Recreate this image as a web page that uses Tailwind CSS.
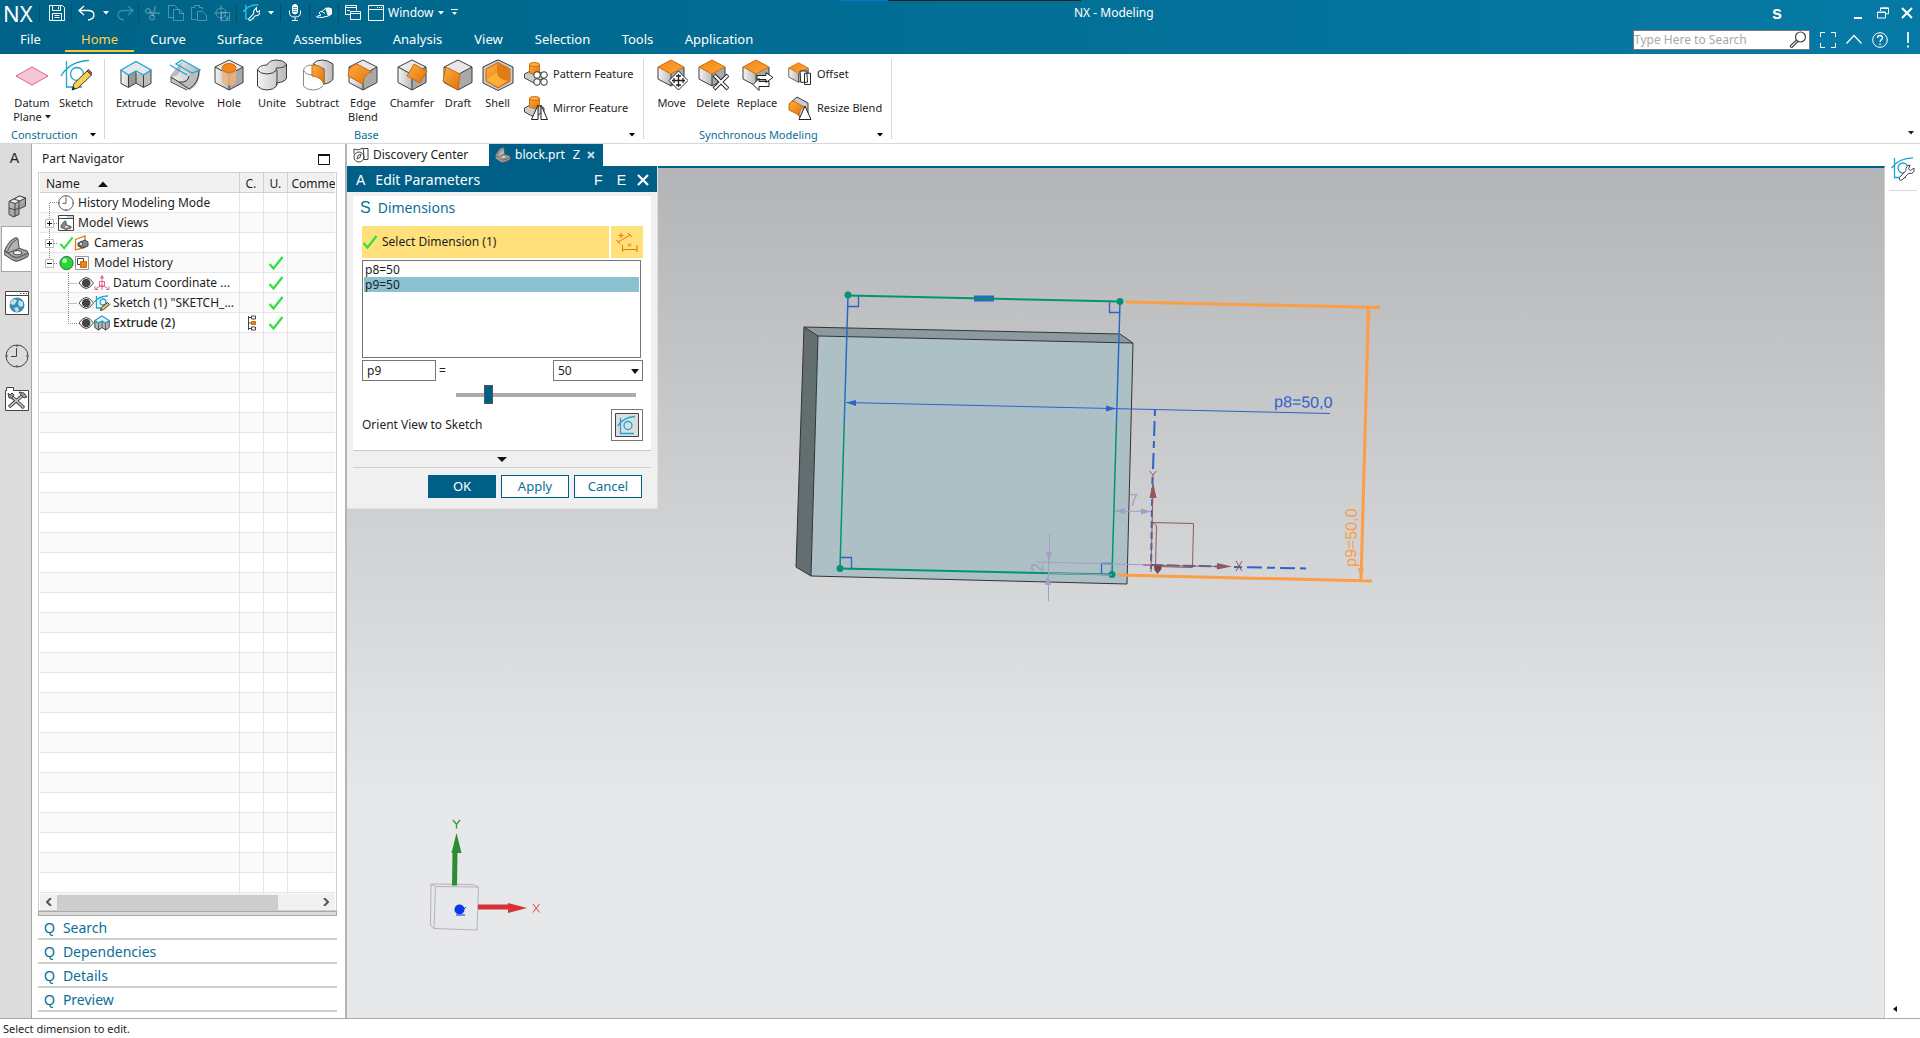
<!DOCTYPE html>
<html lang="en">
<head>
<meta charset="utf-8">
<title>NX - Modeling</title>
<script src="https://cdn.jsdelivr.net/npm/@tailwindcss/browser@4"></script>
</head>
<body class="flex h-screen flex-col overflow-hidden bg-white font-['Noto_Sans',sans-serif] text-xs text-[#1e1e1e]">

<!-- Shared icon symbols -->
<svg class="absolute size-0" aria-hidden="true">
  <defs>
    <linearGradient id="gOrange" x1="0" y1="0" x2="1" y2="1"><stop offset="0" stop-color="#fbb040"/><stop offset="1" stop-color="#e2700a"/></linearGradient>
    <linearGradient id="gTop" x1="0" y1="0" x2="1" y2="1"><stop offset="0" stop-color="#f08a1c"/><stop offset="1" stop-color="#fba430"/></linearGradient>
    <linearGradient id="gGray" x1="0" y1="0" x2="1" y2="0"><stop offset="0" stop-color="#f4f4f4"/><stop offset="1" stop-color="#b9b9b9"/></linearGradient>
    <linearGradient id="gDark" x1="0" y1="0" x2="1" y2="1"><stop offset="0" stop-color="#c8c8c8"/><stop offset="1" stop-color="#8a8a8a"/></linearGradient>
    <symbol id="cube" viewBox="0 0 32 32"><path d="M16 1 30 8 16 15.500 2 8z" fill="#e8e8e8"/><path d="M2 8 16 15.500V31L2 23.500z" fill="url(#gGray)"/><path d="M30 8 16 15.500V31l14-7.500z" fill="#a9a9a9"/><path d="M16 1 30 8v15.500L16 31 2 23.500V8zM2 8l14 7.500L30 8M16 15.500V31" fill="none" stroke="#3c3c3c"/></symbol>
    <symbol id="cubeO" viewBox="0 0 32 32"><path d="M2 8v12l13 7V15z" fill="url(#gGray)"/><path d="M28 8v12l-13 7V15z" fill="#a9a9a9"/><path d="M2 8v12l13 7 13-7V8M15 15v12" fill="none" stroke="#3c3c3c"/><path d="M15 1 28 8l-13 7L2 8z" fill="url(#gTop)" stroke="#d06a10"/></symbol>
    <symbol id="tri" viewBox="0 0 6 4"><path d="M0 0h6L3 3.500z" fill="currentColor"/></symbol>
    <symbol id="check" viewBox="0 0 16 16"><path d="M1.500 9 5.500 13.500 14.500 2" fill="none" stroke="#2ee03c" stroke-width="2.200"/></symbol>
    <symbol id="eye" viewBox="0 0 16 16"><path d="M1 8Q8-3 15.500 8 8 19 1 8z" fill="#fff" stroke="#444"/><circle cx="8.200" cy="8" r="4.300" fill="#444"/></symbol>
    <symbol id="sketchWrench" viewBox="0 0 24 24"><path d="M3.500 1v19.500H15M.5 11Q8 1 22 .8" fill="none" stroke="#19a7d0" stroke-width="1.300"/><circle cx="12" cy="11" r="5" fill="none" stroke="#19a7d0" stroke-width="1.300"/><path d="M8.500 20.500 15 13.500Q14 9 19 8l-1.500 4 2 1.500 3.500-2.500Q24 17 17.500 16.500l-6.500 6.500Q7.500 24 8.500 20.500z" fill="#fff" stroke="#444"/></symbol>
    <symbol id="bracket" viewBox="0 0 24 24">
      <path d="M.7 13.500 2.500 10 14 10.500 22 13.500Q24.500 16 22.500 19L15 22.500Q11 24 8 22L.7 17z" fill="url(#gDark)" stroke="#555"/>
      <path d="M.7 13.500Q3.500 5 10.500 1q2.500-1 3 1.500L14.500 11 4.500 15z" fill="#b4b4b4" stroke="#555"/>
      <path d="M3.500 13.500Q6 6 12.500 2M.7 13.500 8 18.500q3 2 7 .5l8-3.500" fill="none" stroke="#555"/>
      <ellipse cx="13" cy="15" rx="4" ry="2" fill="#ececec" stroke="#555"/>
    </symbol>
    <symbol id="sketchIcon" viewBox="0 0 32 32"><path d="M6.500 2v26H22M1 17Q10 2 29 1.500" fill="none" stroke="#19a7d0" stroke-width="1.300"/><circle cx="17" cy="15" r="6.500" fill="none" stroke="#19a7d0" stroke-width="1.300"/><path d="m12 31 2-6.500L27 12l4.500 4L18 29z" fill="#f7cf52" stroke="#3c3c3c"/><path d="m27 12 1.500-1.500 4 4L31.500 16z" fill="#e05060" stroke="#3c3c3c"/><path d="m12 31 1-3.500 2.500 2z" fill="#222"/></symbol>
    <symbol id="extrude" viewBox="0 0 32 32"><path d="M1 11v13.500l7.500 4L16 24V14.500L8.500 15z" fill="url(#gGray)"/><path d="M31 11v13.500l-7.500 4L16 24V14.500l8 .5z" fill="#bdbdbd"/><path d="M8.500 16v12.500L16 24V12z" fill="#999"/><path d="M1 11v13.500l7.500 4L16 24l7.500 4.500 7.500-4V11M8.500 16v12M16 12v12M23.500 16v12" fill="none" stroke="#3c3c3c"/><path d="M1 11 16 2.500 31 11l-7.500 5-7.500-4-7.500 4z" fill="#e8e8e8" stroke="#19a7d0" stroke-width="1.300"/></symbol>
    <symbol id="extrudeSmall" viewBox="0 0 16 16"><path d="M.8 6v6.500L4.500 15 8 12.500l3.500 2.500 3.700-2.500V6L11.500 8 8 6 4.500 8z" fill="#b8b8b8" stroke="#444"/><path d="M4.500 8v7M8 6v6.500M11.500 8v7" fill="none" stroke="#444" stroke-width=".8"/><path d="M.8 5.500 8 1l7.200 4.500L11.500 8 8 6 4.500 8z" fill="#eee" stroke="#19a7d0" stroke-width="1.300"/></symbol>
    <symbol id="clock" viewBox="0 0 24 24"><circle cx="12" cy="12" r="11" fill="#fff" stroke="#444" stroke-width="1.300"/><path d="M12 4v8.500H6.500M12 1v2M12 21v2M1 12h2M21 12h2" fill="none" stroke="#444" stroke-width="1.300"/></symbol>
  </defs>
</svg>

<header class="relative shrink-0 bg-linear-to-r from-[#006387] to-[#067aa5] text-white">
  <div class="absolute top-0 left-[840px] h-px w-12 bg-[#0078d7]"></div>
  <div class="absolute top-0 left-[888px] h-px w-[193px] bg-[#222]"></div>
  <!-- Title bar -->
  <div class="relative flex h-[27px] items-center pb-0.5">
    <div class="w-[39px] pl-[3px] text-[22px] leading-6">NX</div>
    <div class="flex h-[18px] w-8 items-center justify-center border-l border-[#00506e] pl-0.5">
      <button aria-label="Save"><svg width="16" height="16" viewBox="0 0 16 16" fill="none" stroke="#fff"><path d="M.5.500h13l2 2v13H.5zM3.500.500v5h8v-5M9.500 1.500v3M3.500 15.500v-7h9v7M5.500 10.500h5M5.500 12.500h5"/></svg></button>
    </div>
    <div class="flex h-[18px] w-[67px] items-center border-l border-[#00506e] pl-1.5">
      <button aria-label="Undo"><svg width="17" height="16" viewBox="0 0 17 16" fill="none" stroke="#fff" stroke-width="1.300"><path d="M6 1 1 5.500 6 10M1 5.500h9q6 0 6 4.500 0 4-6 5"/></svg></button>
      <svg class="ml-2" width="6" height="4"><use href="#tri"/></svg>
      <button class="ml-2 opacity-25" aria-label="Redo"><svg width="17" height="16" viewBox="0 0 17 16" fill="none" stroke="#fff" stroke-width="1.300"><path d="m11 1 5 4.500L11 10M16 5.500H7q-6 0-6 4.500 0 4 6 5"/></svg></button>
    </div>
    <div class="flex h-[18px] w-[98px] items-center gap-[7px] border-l border-[#00506e] pl-1.5 text-white/30">
      <button aria-label="Cut"><svg width="16" height="16" viewBox="0 0 16 16" fill="none" stroke="currentColor" stroke-width="1.300"><circle cx="3" cy="6" r="2.300"/><circle cx="7" cy="12.500" r="2.300"/><path d="m5 7 10 1.500M8 10.500 10.500 1M5 7l4 4"/></svg></button>
      <button aria-label="Copy"><svg width="16" height="16" viewBox="0 0 16 16" fill="none" stroke="currentColor"><path d="M5.500 12.500h-5V.500h6l3 3v1M5.500 4.500h6l4 4v7h-10zM11.500 4.500v4h4"/></svg></button>
      <button aria-label="Paste"><svg width="16" height="16" viewBox="0 0 16 16" fill="none" stroke="currentColor"><path d="M5.500 14.500h-5v-12h3v-2h5v2h3v2M6.500 6.500h5l4 4v5h-9z"/></svg></button>
      <button aria-label="Repeat command"><svg width="16" height="16" viewBox="0 0 16 16" fill="none" stroke="currentColor"><circle cx="7" cy="8" r="5"/><path d="M7 0v16M0 8h12M7.500 7.500h8v8h-8zM10 10l4 4m0-3v3h-3"/></svg></button>
    </div>
    <div class="flex h-[18px] w-11 items-center border-l border-[#00506e] pl-1.5">
      <button aria-label="Sketch tools"><svg width="17" height="17" viewBox="0 0 24 24"><path d="M4 1v20h12M.5 11Q8 1 22 1" fill="none" stroke="#28c0ee" stroke-width="2"/><path d="M8.500 20.500 15 13.500Q14 9 19 5l0 5 2 1.500 3-2.500Q24 17 17.500 16.500l-6.500 6.500Q7.500 24 8.500 20.500z" fill="#006b90" stroke="#fff" stroke-width="1.500"/></svg></button>
      <svg class="ml-2" width="6" height="4"><use href="#tri"/></svg>
    </div>
    <div class="flex h-[18px] w-[29px] items-center justify-center border-l border-[#00506e]">
      <button aria-label="Voice"><svg width="12" height="17" viewBox="0 0 12 17" fill="none" stroke="#fff"><rect x="3.500" y=".5" width="5" height="9.500" rx="2.500" fill="#fff"/><path d="M.5 6.500V9q0 4 5.500 4t5.500-4V6.500M6 13v3.500M3 16.500h6"/><path d="M4 3.500h4M4 5.500h4M4 7.500h4" stroke="#006b90" stroke-width=".7"/></svg></button>
    </div>
    <div class="flex h-[18px] w-[29px] items-center justify-center border-l border-[#00506e]">
      <button aria-label="Touch mode"><svg width="16" height="12" viewBox="0 0 16 12" fill="none" stroke="#fff"><path d="M6 4.500 10 1l5 .5v6l-3 1.500-6 1.500L.5 10l1-1L5 8l-2-2q1-2 3-1.500l3 2"/><path d="m10 2 3-1 2.500 1v5L12 8z" fill="#e8f4f8"/></svg></button>
    </div>
    <div class="flex h-[18px] items-center gap-[7px] border-l border-[#00506e] pl-1.5">
      <button aria-label="Switch window"><svg width="16" height="16" viewBox="0 0 16 16" fill="none" stroke="#fff"><path d="M5.500 9.500h-5V.500h11v5M.5 2.500h11M5.500 6.500h10v8h-10zM5.500 8.500h10M2 5.500h3"/></svg></button>
      <button class="flex items-center"><svg width="16" height="16" viewBox="0 0 16 16" fill="none" stroke="#fff"><path d="M.5.500h15v15H.5zM.5 4.500h15M9 2.500h1M11 2.500h1M13 2.500h1"/></svg><span class="ml-1">Window</span><svg class="ml-1" width="6" height="4"><use href="#tri"/></svg></button>
      <button aria-label="Customize toolbar"><svg width="7" height="7" viewBox="0 0 7 7"><path d="M0 0h7v1H0zM1 3h5L3.500 6z" fill="#fff"/></svg></button>
    </div>
    <h1 class="absolute left-[1074px] text-xs">NX - Modeling</h1>
    <div class="mr-[7px] ml-auto flex items-center">
      <span class="mr-[71px] font-['Liberation_Sans',sans-serif] text-lg font-bold">s</span>
      <button class="mr-3.5" aria-label="Minimize"><svg width="10" height="12" viewBox="0 0 10 12"><path d="M1 11h8" stroke="#fff" stroke-width="2"/></svg></button>
      <button class="mr-3" aria-label="Restore"><svg width="12" height="12" viewBox="0 0 12 12" fill="none" stroke="#fff"><path d="M3.500 4V.800h8v6h-3M3.500 1.500h8"/><path d="M.5 5h8v6h-8zM.5 5.500h8"/></svg></button>
      <button aria-label="Close"><svg width="12" height="12" viewBox="0 0 12 12"><path d="m1 1 10 10M11 1 1 11" stroke="#fff" stroke-width="2"/></svg></button>
    </div>
  </div>
  <!-- Ribbon tabs -->
  <nav class="flex h-[27px] items-stretch text-center text-[13px] leading-6">
    <a href="#" class="w-[61px]">File</a>
    <a href="#" class="mb-0.5 ml-1 w-[69px] border-b-2 border-[#ffc531] text-[#ffd24d]">Home</a>
    <a href="#" class="w-[68px]">Curve</a>
    <a href="#" class="w-[76px]">Surface</a>
    <a href="#" class="w-[99px]">Assemblies</a>
    <a href="#" class="w-[81px]">Analysis</a>
    <a href="#" class="w-[61px]">View</a>
    <a href="#" class="w-[87px]">Selection</a>
    <a href="#" class="w-[63px]">Tools</a>
    <a href="#" class="w-[100px]">Application</a>
    <div class="mr-2 ml-auto flex items-start gap-[10px] pt-[3px]">
      <label class="flex h-5 w-[177px] items-center border border-[#777] bg-white pr-0.5">
        <input type="text" aria-label="Search" placeholder="Type Here to Search" class="min-w-0 flex-1 text-xs text-black placeholder:text-[#a8a8a8] focus:outline-none">
        <svg width="18" height="18" viewBox="0 0 18 18" fill="none" stroke="#444" stroke-width="1.200"><circle cx="11.500" cy="6" r="5"/><path d="m7.500 9-6 5.500q-.5 2 1.500 2L9 10.500"/></svg>
      </label>
      <button class="mt-0.5" aria-label="Full screen"><svg width="16" height="16" viewBox="0 0 16 16" fill="none" stroke="#fff"><path d="M5 .500H.5V5M11 .500h4.500V5M5 15.500H.5V11M11 15.500h4.500V11"/></svg></button>
      <button class="mt-1" aria-label="Minimize ribbon"><svg width="16" height="11" viewBox="0 0 16 11" fill="none" stroke="#fff" stroke-width="1.200"><path d="m.5 9.500 7.500-8 7.500 8"/></svg></button>
      <button class="mt-0.5" aria-label="Help"><svg width="16" height="16" viewBox="0 0 16 16" fill="none" stroke="#fff"><circle cx="8" cy="8" r="7.300"/><path d="M5.500 6q0-2.500 2.500-2.500T10.500 6Q10.500 7 8.500 8.500L8 10M8 11.500v1.500" stroke-width="1.300"/></svg></button>
      <button class="mt-0.5 ml-[6px]" aria-label="Alerts"><svg width="8" height="16" viewBox="0 0 8 16"><path d="M4 0v11M4 13.500v2" stroke="#fff" stroke-width="1.700"/></svg></button>
    </div>
  </nav>
</header>

<!-- Ribbon -->
<section class="relative flex h-[90px] shrink-0 items-start border-b border-[#d8d8d8] pt-[5px] text-[11px] leading-[14px]">
  <div class="flex h-20 w-[105px] flex-col border-r border-[#d8d8d8]">
    <div class="flex flex-1 items-start pl-2">
      <button class="flex w-12 flex-col items-center"><svg width="32" height="32" viewBox="0 0 32 32"><path d="M0 17 16 8l16 9-16 9z" fill="#f8c6da" stroke="#d8668c"/></svg><span class="mt-[5px]">Datum</span><span class="flex items-center gap-[3px]">Plane <svg width="6" height="4"><use href="#tri"/></svg></span></button>
      <button class="flex w-10 flex-col items-center"><svg width="32" height="32"><use href="#sketchIcon"/></svg><span class="mt-[5px]">Sketch</span></button>
    </div>
    <div class="flex h-2 items-center justify-between pr-2 pl-[11px] text-[#0a6f96]">Construction <svg class="text-black" width="6" height="4"><use href="#tri"/></svg></div>
  </div>
  <div class="flex h-20 w-[539px] flex-col border-r border-[#d8d8d8]">
    <div class="flex flex-1 items-start pl-[7px]">
      <button class="flex w-12 flex-col items-center"><svg width="32" height="32"><use href="#extrude"/></svg><span class="mt-[5px]">Extrude</span></button>
      <button class="flex w-[49px] flex-col items-center"><svg width="32" height="32" viewBox="0 0 32 32"><path d="M1 17 12 3 31 11Q31 27 20 31L4 23z" fill="#bbb"/><path d="M13 2 30 11 20 16Q19 23 10 23L2 18Q11 18 12 8z" fill="url(#gGray)"/><path d="M2 18 10 23 20 30Q30 24 30 11M2 18v5l16 8M20 17Q19 24 10 23" fill="none" stroke="#3c3c3c"/><path d="M13 1 31 11l-8 3L7 5zM1 6l17 10" fill="none" stroke="#19a7d0" stroke-width="1.300"/></svg><span class="mt-[5px]">Revolve</span></button>
      <button class="flex w-10 flex-col items-center"><svg width="32" height="32"><use href="#cube"/><path d="M9 10v14q7 5 14 0V10z" fill="#efb27a" opacity=".8"/><ellipse cx="16" cy="9" rx="7" ry="4.500" fill="#f5861a" stroke="#d06a10"/></svg><span class="mt-[5px]">Hole</span></button>
      <button class="flex w-[46px] flex-col items-center"><svg width="32" height="32" viewBox="0 0 32 32"><path d="M1.500 11v16q3 4 9.500 4t9.500-4l0-3q9-1 10-5V5q-3-4-10-4t-9.500 5Q3 6 1.500 11z" fill="url(#gGray)" stroke="#3c3c3c"/><path d="M1.500 11q3 4 9.500 4t9.500-4q-1-3 0-2 9 0 10-4M21 11v15" fill="none" stroke="#3c3c3c"/></svg><span class="mt-[5px]">Unite</span></button>
      <button class="flex w-[45px] flex-col items-center"><svg width="32" height="32" viewBox="0 0 32 32"><path d="M11 5Q14 1 20 1t11 4v15q-2 4-9 5V10z" fill="url(#gGray)" stroke="#3c3c3c"/><path d="M10 6q10 0 12 6v14q-2-8-12-9z" fill="url(#gOrange)" stroke="#d06a10"/><path d="M1.500 11v16q3 4 9.500 4t10-4M1.500 11Q3 6 10 6M1.500 11q2 5 9 5" fill="none" stroke="#888"/></svg><span class="mt-[5px]">Subtract</span></button>
      <button class="flex w-[46px] flex-col items-center"><svg width="32" height="32"><use href="#cube"/><path d="M2 11Q4 6 10 5l15 8q-8 1-9 12L1 17z" fill="url(#gOrange)" stroke="#d06a10"/></svg><span class="mt-[5px]">Edge<br>Blend</span></button>
      <button class="flex w-[52px] flex-col items-center"><svg width="32" height="32"><use href="#cube"/><path d="M18 5 31 12 24 24 11 17z" fill="url(#gOrange)" stroke="#d06a10"/></svg><span class="mt-[5px]">Chamfer</span></button>
      <button class="flex w-10 flex-col items-center"><svg width="32" height="32"><use href="#cube"/><path d="M4 8l14 7-2 16L1 22z" fill="url(#gOrange)" stroke="#d06a10"/></svg><span class="mt-[5px]">Draft</span></button>
      <button class="flex w-[39px] flex-col items-center"><svg width="32" height="32" viewBox="0 0 32 32"><path d="M16 .800 31 8v16l-15 7.500L1 24V8z" fill="#ccc" stroke="#3c3c3c"/><path d="M16 3.500 28 10v12l-12 7-12-7V10z" fill="url(#gOrange)" stroke="#c8640c"/><path d="M15 4v10q4 8 12 7L16 28 4 21l11-8z" fill="#fbb03a"/><path d="M15 4 28 10v12q-12-1-13-8z" fill="#e07c18"/></svg><span class="mt-[5px]">Shell</span></button>
      <div class="ml-[7px] flex flex-col gap-[10px] pt-[3px]">
        <button class="flex h-6 items-center gap-[5px]"><svg width="24" height="24" viewBox="0 0 24 24"><path d="M.5 12 10 7l10 5v4l-10 5-9.500-5z" fill="#ccc" stroke="#444"/><path d="M5.500 2v9q5 3 10 0V2z" fill="url(#gOrange)" stroke="#d06a10"/><ellipse cx="10.500" cy="2.500" rx="5" ry="2" fill="#fbb040" stroke="#d06a10"/><g fill="#fff" stroke="#333"><circle cx="13" cy="13" r="3.300"/><circle cx="20" cy="13" r="3.300"/><circle cx="13" cy="20" r="3.300"/><circle cx="20" cy="20" r="3.300"/></g></svg>Pattern Feature</button>
        <button class="flex h-6 items-center gap-[5px]"><svg width="24" height="24" viewBox="0 0 24 24"><path d="M.5 12 10 7l10 5v4l-10 5-9.500-5z" fill="#ccc" stroke="#444"/><path d="M5.500 2v9q5 3 10 0V2z" fill="url(#gOrange)" stroke="#d06a10"/><ellipse cx="10.500" cy="2.500" rx="5" ry="2" fill="#fbb040" stroke="#d06a10"/><path d="M14 9v14.500H7.500zM17 9v14.500h6.500z" fill="#fff" stroke="#222"/></svg>Mirror Feature</button>
      </div>
    </div>
    <div class="flex h-2 items-center pr-2 pl-[249px] text-[#0a6f96]">Base <svg class="ml-auto text-black" width="6" height="4"><use href="#tri"/></svg></div>
  </div>
  <div class="flex h-20 w-[248px] flex-col border-r border-[#d8d8d8]">
    <div class="flex flex-1 items-start pl-[6px]">
      <button class="flex w-[43px] flex-col items-center"><svg width="32" height="32" viewBox="0 0 32 32"><use href="#cubeO"/><path d="m22.500 12 9.500 9.500-9.500 9.500-9.500-9.500z" fill="#fff" stroke="#222"/><path d="M22.500 15v13M16 21.500h13M20 17h5M20 26h5M18 19v5M27 19v5" stroke="#222" stroke-width="1.300"/></svg><span class="mt-[5px]">Move</span></button>
      <button class="flex w-10 flex-col items-center"><svg width="32" height="32" viewBox="0 0 32 32"><use href="#cubeO"/><path d="m17 16 14 14M31 16 17 30" stroke="#222" stroke-width="4"/><path d="m17.500 16.500 13 13M30.500 16.500l-13 13" stroke="#fff" stroke-width="2"/></svg><span class="mt-[5px]">Delete</span></button>
      <button class="flex w-12 flex-col items-center"><svg width="32" height="32" viewBox="0 0 32 32"><use href="#cubeO"/><path d="M16 16.500h9v-3l7 5-7 5v-3h-9zM28 22.500H18v-3l-6 6 6 6v-4h10z" fill="#fff" stroke="#222"/></svg><span class="mt-[5px]">Replace</span></button>
      <div class="ml-[7px] flex flex-col gap-[10px] pt-[3px]">
        <button class="flex h-6 items-center gap-[5px]"><svg width="24" height="24" viewBox="0 0 32 32"><use href="#cubeO" x="-1"/><path d="M22 15h8v15h-8zM16 12h9l1 15h-9z" fill="#fff" stroke="#222" stroke-width="1.300"/></svg>Offset</button>
        <button class="flex h-6 items-center gap-[5px]"><svg width="24" height="24" viewBox="0 0 24 24"><path d="M1 8 9 1l11 6v10l-8 4z" fill="#ccc" stroke="#3c3c3c"/><path d="M1 9q1-4 5-4l10 6q-4 1-5 8L1 14z" fill="url(#gOrange)" stroke="#d06a10"/><path d="m17 10 6 13.500H11z" fill="#fff" stroke="#222"/></svg>Resize Blend</button>
      </div>
    </div>
    <div class="flex h-2 items-center pr-2 pl-[55px] text-[#0a6f96]">Synchronous Modeling <svg class="ml-auto text-black" width="6" height="4"><use href="#tri"/></svg></div>
  </div>
  <svg class="mr-[6px] mb-2 ml-auto self-end" width="6" height="4"><use href="#tri"/></svg>
</section>

<div class="flex min-h-0 flex-1">
  <!-- Resource bar -->
  <nav class="flex w-8 shrink-0 flex-col items-end border-r border-[#a8a8a8] bg-[#dcdcdc]">
    <div class="flex h-11 w-full justify-center pt-[7px] pr-0.5 font-['Liberation_Sans',sans-serif] text-sm leading-[14px]">A</div>
    <button class="flex h-9 w-[29px] items-center justify-center" aria-label="Assembly Navigator"><svg width="20" height="24" viewBox="0 0 20 24" stroke="#444" stroke-linejoin="round"><path d="M2 7.500 12.500 2 18.500 4v8L12 15v5.500L6.500 23 2 20.500z" fill="url(#gDark)"/><path d="M2 7.500 12.500 2l6 2L8 9.500z" fill="#ececec"/><path d="M8 9.500V22M2 14l6 2 4-2V7.500M7 5l6 2.200" fill="none"/></svg></button>
    <button class="mt-0.5 flex h-[46px] w-[30px] items-center justify-center border border-r-0 border-[#a8a8a8] bg-white" aria-label="Part Navigator"><svg width="25" height="25"><use href="#bracket"/></svg></button>
    <button class="mt-[17px] flex h-7 w-[29px] items-center justify-center" aria-label="Web Browser"><svg width="24" height="24" viewBox="0 0 24 24"><path d="M.5.500h23v23H.5z" fill="#fff" stroke="#444"/><path d="M.5 4.500h23M15 2.500h1.500M18 2.500h1.500M21 2.500h1" stroke="#444"/><circle cx="12" cy="14" r="7.500" fill="#3a8cb0"/><path d="M7 9q4-2 5 1l-3 4-4-1zM14 9l4 2v4l-3 1-2-3zM9 17l4-1 1 4-3 1z" fill="#bfe0ec"/></svg></button>
    <button class="mt-[25px] flex h-7 w-[29px] items-center justify-center" aria-label="History"><svg width="24" height="24" viewBox="0 0 24 24"><circle cx="12" cy="12" r="11" fill="none" stroke="#444"/><path d="M11.500 4v8.500H6M12 1v2M12 21v2M1 12h2M21 12h2" fill="none" stroke="#444"/></svg></button>
    <button class="mt-[15px] flex h-7 w-[29px] items-center justify-center" aria-label="Process Studio"><svg width="24" height="24" viewBox="0 0 24 24"><path d="M.5 3.500h1v-3h7v3h15v20H.5z" fill="#fff" stroke="#444"/><path d="M4 20 18 8M5 8l14 13" stroke="#444" stroke-width="3.500"/><path d="M4.500 19.500 17 9M7 9.500l11.500 11" stroke="#ccc" stroke-width="1.500"/><path d="M3 6l2 2 2-2 2 2-2 3H4zM14 5l5 1 3 4-3 1-3-3z" fill="#999" stroke="#444"/></svg></button>
  </nav>

  <!-- Part Navigator -->
  <aside class="flex w-[315px] shrink-0 flex-col border-r-2 border-[#b4b4b4] pr-2 pb-1.5 pl-1.5">
    <div class="flex h-7 items-center justify-between pr-[7px] pl-1 pt-0.5">
      <h2>Part Navigator</h2>
      <svg width="12" height="11" viewBox="0 0 12 11"><path d="M.5 1h11v9.500H.5z" fill="none" stroke="#111"/><path d="M0 1h12" stroke="#111" stroke-width="2"/></svg>
    </div>
    <div class="flex min-h-0 flex-1 flex-col border border-[#d0d0d0] px-px">
      <div class="min-h-0 flex-1 overflow-hidden">
        <table class="w-full table-fixed border-collapse text-xs leading-[19px]">
          <colgroup><col class="w-[199px]"><col class="w-6"><col class="w-6"><col></colgroup>
          <thead>
            <tr class="h-[19px] border-b border-[#d0d0d0] bg-[#f0f0f0] text-left text-xs leading-4">
              <th class="border-r border-[#d0d0d0] pt-[3px] pl-1.5 font-normal"><span class="flex items-center gap-[18px]">Name <svg width="10" height="6" viewBox="0 0 10 6"><path d="M0 6 5 .500 10 6z" fill="#111"/></svg></span></th>
              <th class="border-r border-[#d0d0d0] pt-[3px] pl-1.5 font-normal">C.</th>
              <th class="border-r border-[#d0d0d0] pt-[3px] pl-1.5 font-normal">U.</th>
              <th class="pt-[3px] pl-1 font-normal">Comme</th>
            </tr>
          </thead>
          <tbody id="tree">
            <tr class="h-5 border-b border-[#e6e6e6]">
              <td class="border-r border-[#e6e6e6]"><div class="flex h-[19px] items-center whitespace-nowrap"><svg class="shrink-0" width="18" height="19"><path d="M9.500 19V9.500H18" fill="none" stroke="#888" stroke-dasharray="1 1"/></svg><svg class="shrink-0" width="16" height="16"><use href="#clock"/></svg><span class="ml-1">History Modeling Mode</span></div></td>
              <td class="border-r border-[#e6e6e6]"></td><td class="border-r border-[#e6e6e6]"></td><td></td>
            </tr>
            <tr class="h-5 border-b border-[#e6e6e6] bg-[#fafafa]">
              <td class="border-r border-[#e6e6e6]"><div class="flex h-[19px] items-center whitespace-nowrap"><svg class="shrink-0" width="18" height="19"><path d="M9.500 0v19M14 10.500h4" fill="none" stroke="#888" stroke-dasharray="1 1"/><path d="M5.500 6.500h8v8h-8z" fill="#fff" stroke="#bbb"/><path d="M7 10.500h5M9.500 8v5" stroke="#111"/></svg><svg class="shrink-0" width="16" height="16" viewBox="0 0 16 16"><path d="M.5.500h15v15H.5z" fill="#fff" stroke="#444"/><path d="M1 3.500h14M9.500 2h1M11.500 2h1M13.500 2h1" stroke="#444"/><path d="M3 10.500 6.500 6q1.500-.5 1.500 1l.5 3 4.500 1.500v1.500l-5 1.500-5-2z" fill="#888" stroke="#444" stroke-width=".8"/><ellipse cx="8.500" cy="12" rx="1.800" ry=".8" fill="#fff"/></svg><span class="ml-1">Model Views</span></div></td>
              <td class="border-r border-[#e6e6e6]"></td><td class="border-r border-[#e6e6e6]"></td><td></td>
            </tr>
            <tr class="h-5 border-b border-[#e6e6e6]">
              <td class="border-r border-[#e6e6e6]"><div class="flex h-[19px] items-center whitespace-nowrap"><svg class="shrink-0" width="18" height="19"><path d="M9.500 0v19M14 10.500h4" fill="none" stroke="#888" stroke-dasharray="1 1"/><path d="M5.500 6.500h8v8h-8z" fill="#fff" stroke="#bbb"/><path d="M7 10.500h5M9.500 8v5" stroke="#111"/></svg><svg class="ml-px shrink-0" width="15" height="16"><use href="#check"/></svg><svg class="shrink-0" width="16" height="16" viewBox="0 0 16 16"><path d="M1.500 4.500 11 1v11.500L1.500 15z" fill="#fff" stroke="#e8750e" stroke-width="1.300"/><path d="m4 8 7-3 3 2v4l-6 2-4-2z" fill="#888" stroke="#444"/><circle cx="7" cy="9" r="2" fill="#ddd" stroke="#444"/></svg><span class="ml-1">Cameras</span></div></td>
              <td class="border-r border-[#e6e6e6]"></td><td class="border-r border-[#e6e6e6]"></td><td></td>
            </tr>
            <tr class="h-5 border-b border-[#e6e6e6] bg-[#fafafa]">
              <td class="border-r border-[#e6e6e6]"><div class="flex h-[19px] items-center whitespace-nowrap"><svg class="shrink-0" width="18" height="19"><path d="M9.500 0v7M14 10.500h4" fill="none" stroke="#888" stroke-dasharray="1 1"/><path d="M5.500 6.500h8v8h-8z" fill="#fff" stroke="#bbb"/><path d="M7 10.500h5" stroke="#111"/></svg><svg class="ml-px shrink-0" width="15" height="16" viewBox="0 0 16 16"><circle cx="8" cy="8" r="7" fill="#25d935" stroke="#3a5a3a"/><circle cx="6" cy="5.500" r="2.500" fill="#b8f8bc"/></svg><svg class="shrink-0" width="16" height="16" viewBox="0 0 16 16"><path d="M1.500 1.500h13v13h-13z" fill="#fff" stroke="#999"/><path d="M3.500 3.500h6v6h-6z" fill="#fff" stroke="#444"/><path d="M6.500 6.500h6v6h-6z" fill="#f08018" stroke="#d06a10"/></svg><span class="ml-1">Model History</span></div></td>
              <td class="border-r border-[#e6e6e6]"></td><td class="border-r border-[#e6e6e6] pl-1"><svg width="16" height="16"><use href="#check"/></svg></td><td></td>
            </tr>
            <tr class="h-5 border-b border-[#e6e6e6]">
              <td class="border-r border-[#e6e6e6]"><div class="flex h-[19px] items-center whitespace-nowrap"><svg class="shrink-0" width="38" height="19"><path d="M28.500 0v19M28.500 10.500H37" fill="none" stroke="#888" stroke-dasharray="1 1"/></svg><svg class="shrink-0" width="16" height="16"><use href="#eye"/></svg><svg class="shrink-0" width="16" height="16" viewBox="0 0 16 16" fill="none" stroke="#d8668c"><path d="M8 1v14M8 10l6 3.500M8 10l-6 3.500M5.500 6.500h5v5h-5zM6.500 3 8 .500 9.500 3zM1 11.500v3h3M15 11.500v3h-3"/></svg><span class="ml-[3px]">Datum Coordinate ...</span></div></td>
              <td class="border-r border-[#e6e6e6]"></td><td class="border-r border-[#e6e6e6] pl-1"><svg width="16" height="16"><use href="#check"/></svg></td><td></td>
            </tr>
            <tr class="h-5 border-b border-[#e6e6e6] bg-[#fafafa]">
              <td class="border-r border-[#e6e6e6]"><div class="flex h-[19px] items-center whitespace-nowrap"><svg class="shrink-0" width="38" height="19"><path d="M28.500 0v19M28.500 10.500H37" fill="none" stroke="#888" stroke-dasharray="1 1"/></svg><svg class="shrink-0" width="16" height="16"><use href="#eye"/></svg><svg class="shrink-0" width="16" height="16" viewBox="0 0 16 16"><path d="M2.500 1v12H8M.5 7Q5 1 14 1" fill="none" stroke="#19a7d0" stroke-width="1.300"/><circle cx="9" cy="7" r="3" fill="none" stroke="#19a7d0" stroke-width="1.300"/><path d="m6.500 15.500 1-3 6-5 2 2-6 5z" fill="#f7cf52" stroke="#333"/></svg><span class="ml-[3px]">Sketch (1) "SKETCH_...</span></div></td>
              <td class="border-r border-[#e6e6e6]"></td><td class="border-r border-[#e6e6e6] pl-1"><svg width="16" height="16"><use href="#check"/></svg></td><td></td>
            </tr>
            <tr class="h-5 border-b border-[#e6e6e6]">
              <td class="border-r border-[#e6e6e6]"><div class="flex h-[19px] items-center whitespace-nowrap"><svg class="shrink-0" width="38" height="19"><path d="M28.500 0v10.500H37" fill="none" stroke="#888" stroke-dasharray="1 1"/></svg><svg class="shrink-0" width="16" height="16"><use href="#eye"/></svg><svg class="shrink-0" width="16" height="16"><use href="#extrudeSmall"/></svg><span class="ml-[3px] font-medium">Extrude (2)</span></div></td>
              <td class="border-r border-[#e6e6e6] pl-1"><svg width="14" height="16" viewBox="0 0 14 16"><path d="M4.500 1v14M4.500 2.500H7M4.500 8H7M4.500 13.500H7" stroke="#444"/><path d="M7.500 1h4v3h-4zM7.500 12h4v3h-4z" fill="#fff" stroke="#444"/><path d="M7.500 6.500h4v3h-4z" fill="#f08018" stroke="#d06a10"/></svg></td><td class="border-r border-[#e6e6e6] pl-1"><svg width="16" height="16"><use href="#check"/></svg></td><td></td>
            </tr>
          </tbody>
        </table>
      </div>
      <div class="flex h-4 items-center bg-[#f0f0f0] px-1.5">
        <svg width="6" height="8" viewBox="0 0 6 8" fill="none" stroke="#555" stroke-width="2"><path d="M5 0 1 4l4 4"/></svg>
        <div class="ml-[5px] h-[15px] w-[221px] bg-[#cdcdcd]"></div>
        <svg class="ml-auto" width="6" height="8" viewBox="0 0 6 8" fill="none" stroke="#555" stroke-width="2"><path d="m1 0 4 4-4 4"/></svg>
      </div>
    </div>
    <div class="h-[5px] border border-[#a8a8a8] bg-[#dcdcdc]"></div>
    <div class="text-sm leading-6 text-[#0a6f96]">
      <button class="flex h-6 w-full items-start gap-2 border-b-2 border-[#d0d0d0] pl-1.5"><span class="font-['Liberation_Sans',sans-serif]">Q</span>Search</button>
      <button class="flex h-6 w-full items-start gap-2 border-b-2 border-[#d0d0d0] pl-1.5"><span class="font-['Liberation_Sans',sans-serif]">Q</span>Dependencies</button>
      <button class="flex h-6 w-full items-start gap-2 border-b-2 border-[#d0d0d0] pl-1.5"><span class="font-['Liberation_Sans',sans-serif]">Q</span>Details</button>
      <button class="flex h-6 w-full items-start gap-2 border-b-2 border-[#d0d0d0] pl-1.5"><span class="font-['Liberation_Sans',sans-serif]">Q</span>Preview</button>
    </div>
  </aside>

  <!-- Work area -->
  <main class="flex min-w-0 flex-1 flex-col">
    <div class="flex h-[22px] shrink-0 items-center">
      <button class="flex w-[142px] items-center gap-1 pl-1.5"><svg width="16" height="16" viewBox="0 0 16 16" fill="none" stroke="#444"><path d="m1 2 4 1 5-2 .5 3M1 2v5M10.500 1.500h4.500v11h-4l-.5-9"/><circle cx="6" cy="10" r="5"/><path d="m4 12 1-3.500L8 7l-1 3.500z"/></svg>Discovery Center</button>
      <button class="flex h-full w-[114px] items-center bg-[#005f87] pl-1.5 text-white"><svg width="16" height="16"><use href="#bracket"/></svg><span class="ml-1">block.prt</span><span class="ml-2 font-['Liberation_Sans',sans-serif]">Z</span><svg class="ml-[7px]" width="8" height="8" viewBox="0 0 8 8"><path d="m1 1 6 6M7 1 1 7" stroke="#c8d8e0" stroke-width="2"/></svg></button>
    </div>
    <div class="relative min-h-0 flex-1 border-t-2 border-r border-[#005f87] border-r-[#d0d0d0] bg-linear-to-b from-[#b4b5b7] to-[#e6e8ea] to-75%">
      <svg class="block h-full w-full" viewBox="347 168 1537 849" preserveAspectRatio="xMinYMin meet" fill="none">
        <!-- Solid block -->
        <path d="m804 327 316 7 13 9-315-7z" fill="#8b9a9f"/>
        <path d="m804 327 14 9-7 240-15-9z" fill="#626e70"/>
        <path d="m818 336 315 7-6 241-316-8z" fill="#adc0c6"/>
        <path d="m804 327 316 7 13 9-6 241-316-8-15-9zM804 327l14 9 315 7M818 336l-7 240" stroke="#333"/>
        <!-- Sketch -->
        <linearGradient id="gSide" gradientUnits="userSpaceOnUse" x1="0" y1="296" x2="0" y2="430"><stop offset="0" stop-color="#2f62cc"/><stop offset=".9" stop-color="#2470c0"/><stop offset="1" stop-color="#00966c"/></linearGradient>
        <path d="M848 295 840 568M1120 302l-8 273" stroke="url(#gSide)" stroke-width="1.500"/>
        <path d="M974 298.500h20" stroke="#2f62cc" stroke-width="6"/>
        <path d="m848 295.500 272 6M840 568.500l272 6" stroke="#00966c" stroke-width="2"/>
        <path d="M848 306.500h10.500V296M1109.500 302v10.500H1120M841 557.500h10.500V568M1101.500 574v-10.500H1112" stroke="#2f62cc" stroke-width="1.300"/>
        <g fill="#00966c" stroke="#1a80a0" stroke-width=".8"><circle cx="848" cy="295" r="3.200"/><circle cx="1120" cy="301.500" r="3.200"/><circle cx="1112" cy="574.500" r="3.200"/><circle cx="840" cy="568.500" r="3.200"/></g>
        <!-- Horizontal dimension -->
        <path d="m846 402.500 484 11" stroke="#2f62cc"/>
        <path d="m846 402.500 10-2.500v6zM1116 408.500l-10-3v6z" fill="#2f62cc"/>
        <text x="1274" y="407" transform="rotate(1 1274 407)" fill="#2f62cc" class="font-['Liberation_Sans',sans-serif] text-base">p8=50,0</text>
        <!-- Vertical dimension -->
        <g stroke="#fb9e46" stroke-width="3"><path d="m1126 302 254 5.500M1118 575l254 6M1368.500 308l-7.500 272"/></g>
        <path d="m1368.500 308 3 11h-6zM1361 579l3-11h-6z" fill="#fb9e46"/>
        <text x="1356" y="567" transform="rotate(-89 1356 567)" fill="#fb9e46" class="font-['Liberation_Sans',sans-serif] text-base">p9=50,0</text>
        <!-- Locating dimensions -->
        <g stroke="#a49dc6"><path d="m1115 511 36 .5M1049.500 534v18M1048.500 561v40M1037 562l114 3M1048 573l64 2"/></g>
        <path d="m1115 511 10-3v6zM1151 511.500l-10-3v6zM1049 562l-3-10h6zM1048 575l-3 10h6z" fill="#a49dc6"/>
        <text x="1129" y="506" fill="#a49dc6" class="font-['Liberation_Sans',sans-serif] text-base">7</text>
        <text x="1043" y="572" transform="rotate(-90 1043 572)" fill="#a49dc6" class="font-['Liberation_Sans',sans-serif] text-base">2</text>
        <!-- Sketch axes -->
        <g stroke="#2f62cc" stroke-width="2"><path d="m1155 409-2 61" stroke-dasharray="7 5 15 5 7 5 16 3"/><path d="m1152.500 477-1.500 92" stroke-dasharray="7 4"/><path d="m1151 565 66 1.500" stroke-dasharray="12 4"/><path d="m1234 567 72 1.500" stroke-dasharray="8 5 15 5 8 5 15 5"/></g>
        <g stroke="#94585c"><path d="m1153 484-2 88M1143 565l74 1.500M1151 522.500l42.500 1-1 44-37-1 1-41-4-3M1149.500 471l3.500 4 3.500-4M1153 475v5M1236 561l6 10M1242 561l-6 10"/></g>
        <path d="m1153 482 3.500 16h-7zM1232 566.500l-15-3.500v6.500z" fill="#94585c"/><path d="m1154 566 7 0 .5 3-4 5-3-4z" fill="#7d4549"/>
        <!-- View triad -->
        <path d="m431 884 42 .5 5.500 2.500-1.500 43-43-1.500-3.500-3zM431 884l4.500 2.500 43 .5M435.500 886.500l-1.500 42" stroke="#b4b4b6"/>
        <path d="M452.500 851h5l-.5 34.500h-5z" fill="#2c8c30"/><path d="m456.500 833 5 20h-10z" fill="#2c8c30"/>
        <path d="M478 904.500h31v5h-31z" fill="#d83034"/><path d="m527 908-19-5v10z" fill="#d83034"/>
        <circle cx="459.500" cy="909.500" r="5" fill="#0838e8"/><path d="M456 915h9M461 912l5-5" stroke="#0838e8"/>
        <path d="m453 820 3.500 4.500 3.500-4.500M456.500 824.500v4" stroke="#2c9c34" stroke-width="1.300"/>
        <path d="m533 904 6.500 8.500M539.500 904l-6.500 8.500" stroke="#d84040"/>
      </svg>

      <!-- Edit Parameters dialog -->
      <form class="absolute -top-0.5 left-0 w-[311px] border-r border-b border-[#e0e0e0] bg-[#f0f0f0] pb-[10px]">
        <div class="flex h-[26px] items-center bg-[#005f87] pt-px pr-2 pl-[9px] text-white">
          <span class="font-['Liberation_Sans',sans-serif] text-sm">A</span>
          <h2 class="ml-[10px] text-sm">Edit Parameters</h2>
          <span class="ml-auto font-['Liberation_Sans',sans-serif] text-sm">F</span>
          <span class="ml-3.5 font-['Liberation_Sans',sans-serif] text-sm">E</span>
          <button type="button" class="ml-[11px]" aria-label="Close dialog"><svg width="12" height="12" viewBox="0 0 12 12"><path d="m1 1 10 10M11 1 1 11" stroke="#fff" stroke-width="2.200"/></svg></button>
        </div>
        <div class="mx-1.5 mt-1 border-b border-[#c8c8c8] bg-white pr-[8px] pb-[9px] pl-[9px]">
          <div class="-ml-0.5 flex h-[30px] items-start text-sm leading-6 text-[#0a6f96]"><span class="font-['Liberation_Sans',sans-serif] text-base">S</span><h3 class="ml-[7px]">Dimensions</h3></div>
          <div class="flex h-8 gap-0.5">
            <div class="flex flex-1 items-center gap-1 bg-[#ffe07a]"><svg width="16" height="16"><use href="#check"/></svg>Select Dimension (1)</div>
            <button type="button" class="flex w-8 items-center justify-center bg-[#ffe07a]" aria-label="Dimension filter"><svg width="22" height="20" viewBox="0 0 22 20" fill="none" stroke="#e8750e"><path d="m2 10 12-7M.5 8l3.500 4M12 1l4 4M5 1v5M2.500 3.500h5M6.500 13v7M21 13v7M6.500 17.500H21M12 11.500l3 3M15 11.500l-3 3"/></svg></button>
          </div>
          <ul role="listbox" aria-label="Dimensions" class="mt-0.5 mr-0.5 h-[98px] border border-[#777] p-px leading-[15px]">
            <li role="option" class="pl-px">p8=50</li>
            <li role="option" aria-selected="true" class="bg-[#8bc2d1] pl-px">p9=50</li>
          </ul>
          <div class="mt-0.5 flex h-[21px] items-center">
            <input type="text" value="p9" aria-label="Parameter name" class="h-full w-[74px] border border-[#777] pl-1">
            <span class="ml-[3px]">=</span>
            <div class="relative ml-auto h-full w-[90px]">
              <select aria-label="Parameter value" class="h-full w-full appearance-none border border-[#777] bg-white pl-1"><option>50</option></select>
              <svg class="pointer-events-none absolute top-[9px] right-1" width="8" height="5" viewBox="0 0 6 4" preserveAspectRatio="none"><path d="M0 0h6L3 4z" fill="#111"/></svg>
            </div>
          </div>
          <input type="range" min="0" max="300" value="49" aria-label="Value slider" class="mt-1 mr-[7px] ml-auto block h-5 w-[180px] appearance-none bg-transparent [&::-webkit-slider-runnable-track]:h-1 [&::-webkit-slider-runnable-track]:bg-[#ababab] [&::-webkit-slider-thumb]:-mt-2 [&::-webkit-slider-thumb]:h-[19px] [&::-webkit-slider-thumb]:w-[9px] [&::-webkit-slider-thumb]:appearance-none [&::-webkit-slider-thumb]:border [&::-webkit-slider-thumb]:border-[#555] [&::-webkit-slider-thumb]:bg-[#005f87]">
          <div class="mt-1 flex h-8 items-center justify-between">
            <label for="orient">Orient View to Sketch</label>
            <button id="orient" type="button" class="flex size-8 items-center justify-center border border-[#777]"><svg width="24" height="24" viewBox="0 0 24 24"><path d="M.5.500h23v23H.5z" fill="#ddd" stroke="#444"/><path d="M5.500 5v15.500H19M2.500 13Q9 4 20 3.500" fill="none" stroke="#19a7d0" stroke-width="1.300"/><circle cx="13" cy="12.500" r="4" fill="none" stroke="#19a7d0" stroke-width="1.300"/></svg></button>
          </div>
        </div>
        <div class="mx-1.5 flex h-[17px] items-center justify-center border-b border-[#d0d0d0]"><svg width="10" height="5" viewBox="0 0 6 4" preserveAspectRatio="none"><path d="M0 0h6L3 4z" fill="#111"/></svg></div>
        <div class="mt-[7px] flex justify-end gap-[5px] pr-[15px] text-[13px]">
          <button type="button" class="h-[23px] w-[68px] bg-[#005f87] text-white">OK</button>
          <button type="button" class="h-[23px] w-[68px] border border-[#005f87] bg-white text-[#0a6f96]">Apply</button>
          <button type="button" class="h-[23px] w-[68px] border border-[#005f87] bg-white text-[#0a6f96]">Cancel</button>
        </div>
      </form>
    </div>
  </main>

  <!-- Right tool strip -->
  <aside class="flex w-[35px] shrink-0 flex-col items-center">
    <button class="mt-3 flex h-[35px] w-7 justify-center border-b border-[#d8d8d8]" aria-label="Sketch options"><svg width="24" height="26"><use href="#sketchWrench"/></svg></button>
    <svg class="mt-auto mr-4 mb-1.5" width="4" height="6" viewBox="0 0 4 6"><path d="M4 0v6L0 3z" fill="#111"/></svg>
  </aside>
</div>

<footer class="flex h-5 shrink-0 items-center border-t border-[#a8a8a8] pt-0.5 pl-[3px] text-[11px]">Select dimension to edit.</footer>

<template id="blankRow"><tr class="h-5 border-b border-[#e6e6e6] odd:bg-white even:bg-[#fafafa]"><td class="border-r border-[#e6e6e6]"></td><td class="border-r border-[#e6e6e6]"></td><td class="border-r border-[#e6e6e6]"></td><td></td></tr></template>
<script>
  // Fill the rest of the navigator grid with empty striped rows
  const tree = document.getElementById('tree');
  const blank = document.getElementById('blankRow');
  for (let i = 0; i < 40; i++) tree.append(blank.content.cloneNode(true));
</script>
</body>
</html>
